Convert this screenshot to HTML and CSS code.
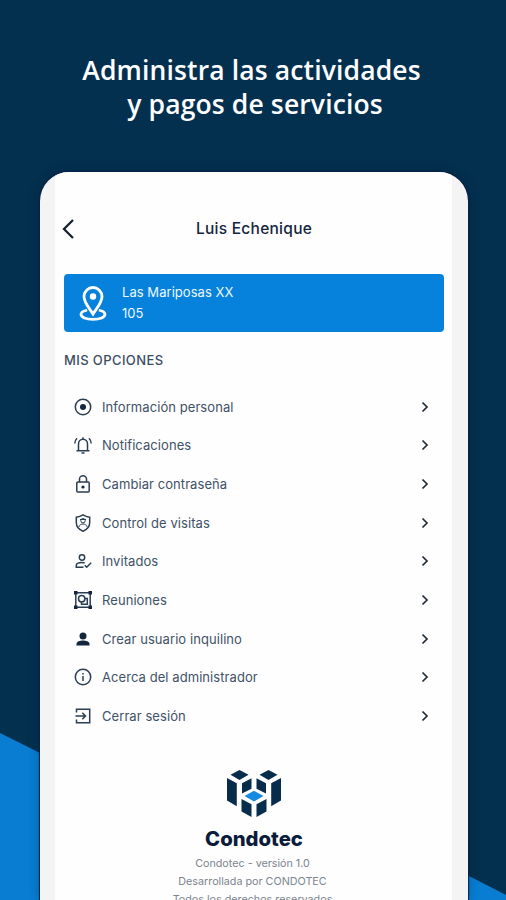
FILE: index.html
```html
<!DOCTYPE html>
<html lang="es">
<head>
<meta charset="utf-8">
<title>Condotec</title>
<link rel="stylesheet" href="styles.css">
</head>
<body>
<main class="promo">
  <svg class="backdrop" viewBox="0 0 506 900" aria-hidden="true"><path d="M0 733L40 753V900H0z"/><path d="M467 875L506 895V900H467z"/></svg>
  <h1 class="headline"><span class="line-one">Administra las actividades</span><br><span class="line-two">y pagos de servicios</span></h1>
  <section class="phone">
    <div class="screen">
      <header class="topbar">
        <svg class="back" viewBox="0 0 14 22"><path d="M12 2L3 11l9 9"/></svg>
        <h2>Luis Echenique</h2>
      </header>
      <div class="place">
        <svg class="pin" viewBox="0 0 28 36"><path d="M14 28C11 23 5 17 5 10.500a9 9 0 0 1 18 0C23 17 17 23 14 28z"/><circle cx="14" cy="10.500" r="3.200" class="fill"/><path d="M7 24.500c-3.500.8-5 2.300-5 3.800 0 3 5 5 12 5s12-2 12-5c0-1.500-1.500-3-5-3.800"/></svg>
        <div><p>Las Mariposas XX</p><p>105</p></div>
      </div>
      <h3 class="section-title">MIS OPCIONES</h3>
      <ul class="options">
        <li><svg class="icon" viewBox="0 0 18 18"><circle cx="9" cy="9" r="7.700"/><circle cx="9" cy="9" r="3" class="fill"/></svg><span class="label">Información personal</span><svg class="chevron" viewBox="0 0 8 12"><path d="M1.500 1.500L6 6l-4.500 4.500"/></svg></li>
        <li><svg class="icon" viewBox="0 0 18 18"><path d="M2.500 14.800h13M4.500 14.500V8a4.500 4.800 0 0 1 9 0v6.500M9 3V1.300M7.500 17h3M.8 7.500c0-2.500.8-4 2.300-5.300M17.200 7.500c0-2.500-.8-4-2.300-5.300"/></svg><span class="label">Notificaciones</span><svg class="chevron" viewBox="0 0 8 12"><path d="M1.500 1.500L6 6l-4.500 4.500"/></svg></li>
        <li><svg class="icon" viewBox="0 0 18 18"><rect x="2.800" y="7" width="12.400" height="10" rx="1"/><path d="M5.500 7V4a3.500 3.200 0 0 1 7 0v3"/><circle cx="9" cy="12" r="1.600" class="fill"/></svg><span class="label">Cambiar contraseña</span><svg class="chevron" viewBox="0 0 8 12"><path d="M1.500 1.500L6 6l-4.500 4.500"/></svg></li>
        <li><svg class="icon" viewBox="0 0 18 18"><path d="M9 .9c2 1.300 4 2 6.700 2.300v5.300c0 4-2.400 7-6.700 8.700-4.300-1.700-6.700-4.700-6.700-8.700V3.200C5 2.900 7 2.200 9 .9z"/><circle cx="9" cy="6.700" r="2.200" class="thin"/><path class="thin" d="M4.800 13c.7-2 2-3 4.200-3s3.500 1 4.200 3M6 5.500h6"/></svg><span class="label">Control de visitas</span><svg class="chevron" viewBox="0 0 8 12"><path d="M1.500 1.500L6 6l-4.500 4.500"/></svg></li>
        <li><svg class="icon" viewBox="0 0 18 18"><circle cx="8" cy="5.500" r="2.700"/><path d="M9.500 15.200H2.300v-1.600c0-1.800 2.500-3 5.700-3 1 0 2 .1 2.700.4M10.800 13.300l1.900 1.900 4.400-4.400"/></svg><span class="label">Invitados</span><svg class="chevron" viewBox="0 0 8 12"><path d="M1.500 1.500L6 6l-4.500 4.500"/></svg></li>
        <li><svg class="icon" viewBox="0 0 18 18"><path d="M1.800 1.800h14.400v14.400H1.800z"/><path class="fill" d="M0 0h3.500v3.500H0zM14.500 0H18v3.500h-3.500zM0 14.500h3.500V18H0zM14.500 14.500H18V18h-3.500z"/><circle cx="7.700" cy="7.700" r="3.200"/><path d="M11 7.500h2.300v5.800H7.500V11"/></svg><span class="label">Reuniones</span><svg class="chevron" viewBox="0 0 8 12"><path d="M1.500 1.500L6 6l-4.500 4.500"/></svg></li>
        <li><svg class="icon" viewBox="0 0 18 18"><circle cx="9" cy="6" r="3.500" class="fill"/><path class="fill" d="M2.500 15.500v-1.800c0-2.100 3.500-3.300 6.500-3.300s6.500 1.200 6.500 3.300v1.800z"/></svg><span class="label">Crear usuario inquilino</span><svg class="chevron" viewBox="0 0 8 12"><path d="M1.500 1.500L6 6l-4.500 4.500"/></svg></li>
        <li><svg class="icon" viewBox="0 0 18 18"><circle cx="9" cy="9" r="7.700"/><path d="M9 8v5M9 4.900v1.600"/></svg><span class="label">Acerca del administrador</span><svg class="chevron" viewBox="0 0 8 12"><path d="M1.500 1.500L6 6l-4.500 4.500"/></svg></li>
        <li><svg class="icon" viewBox="0 0 18 18"><path d="M2.500 5.500V2.200h13.200v13.600H2.500v-3.300M1.500 9h9.500M8.300 5.800L11.500 9l-3.200 3.200"/></svg><span class="label">Cerrar sesión</span><svg class="chevron" viewBox="0 0 8 12"><path d="M1.500 1.500L6 6l-4.500 4.500"/></svg></li>
      </ul>
      <footer class="about">
        <svg class="logo" viewBox="0 0 54 48"><path d="M12.500 0l9 4.700-9 5.300-9-5.300zM41.500 0l9 4.700-9 5.300-9-5.300zM0 8l9.800 5.200v23L0 30.500zM54 8l-9.800 5.200v23L54 30.500zM15 13.200l9.500-5v10.600L15 23.500zM39 13.200l-9.500-5v10.600l9.500 4.700zM14.500 29l10 5.300V47l-10-5.600zM39.500 29l-10 5.300V47l10-5.600z"/><path class="blue" d="M27 20.800l9.500 5.300-9.500 5.400-9.500-5.400z"/></svg>
        <p class="brand">Condotec</p>
        <p class="credit">Condotec - versión 1.0</p>
        <p class="credit">Desarrollada por CONDOTEC</p>
        <p class="credit">Todos los derechos reservados</p>
      </footer>
    </div>
  </section>
</main>
</body>
</html>
```
FILE: styles.css
```css
* { box-sizing: border-box; }
body { margin: 0; font-family: Inter, sans-serif; }
h1, h2, h3, p, ul { margin: 0; padding: 0; }
svg { display: block; flex: none; }
.promo { position: relative; height: 900px; overflow: hidden; background: #03304f; }
.backdrop { position: absolute; inset: 0; width: 506px; height: 900px; fill: #087dd2; }
.headline { position: relative; height: 172px; padding: 53px 3px 0 0; text-align: center; color: #fff; font: 600 26.500px/34px "Open Sans", sans-serif; letter-spacing: .13px; white-space: nowrap; }
.headline .line-two { padding-left: 7px; }
.phone { position: relative; width: 428px; height: 728px; margin-left: 40px; padding: 0 16px 0 15px; overflow: hidden; background: #f4f4f4; border-radius: 29px 29px 0 0; box-shadow: 0 0 1px 1px #08234b, 0 0 12px rgba(0, 18, 38, .3); }
.screen { height: 728px; padding: 0 8px 0 9px; overflow: hidden; background: #fefefe; }
.topbar { display: grid; grid-template-columns: 14px 1fr 14px; align-items: center; height: 102px; padding-top: 11px; }
.back { width: 14px; height: 22px; margin-left: -3px; }
.back path { fill: none; stroke: #16202e; stroke-width: 2.300; }
.topbar h2 { color: #14263d; font-size: 15.500px; font-weight: 500; letter-spacing: .27px; line-height: 20px; text-align: center; }
.place { display: flex; height: 58px; padding: 8px 15px; gap: 15px; color: #eef8ff; background: #0782dc; border-radius: 4px; }
.pin { width: 28px; height: 36px; margin-top: 4px; }
.pin path { fill: none; stroke: #fff; stroke-width: 2.800; stroke-linecap: round; }
.pin .fill { fill: #fff; }
.place p { font-size: 13px; letter-spacing: .05px; line-height: 21px; white-space: nowrap; }
.section-title { height: 55.500px; padding-top: 17.500px; color: #3b4d62; font-size: 13px; font-weight: 500; letter-spacing: .4px; line-height: 20px; white-space: nowrap; }
.options { list-style: none; }
.options li { display: flex; align-items: center; height: 38.660px; padding: 0 15px 0 10px; color: #3f5267; font-size: 13px; letter-spacing: .07px; }
.icon { width: 18px; height: 18px; fill: none; stroke: #2b3d51; stroke-width: 1.500; }
.icon .fill { fill: #14263d; stroke: none; }
.icon .thin { stroke-width: 1; }
.label { margin-left: 10px; white-space: nowrap; }
.chevron { width: 8px; height: 12px; margin-left: auto; fill: none; stroke: #202a36; stroke-width: 1.700; }
.about { display: flex; flex-direction: column; align-items: center; padding-top: 34.500px; white-space: nowrap; }
.logo { width: 54px; height: 48px; fill: #082d4c; }
.logo .blue { fill: #168ae3; }
.brand { height: 37px; padding-top: 7px; color: #0b1c3b; font-size: 20.300px; font-weight: 800; line-height: 28px; }
.credit { padding-right: 3px; color: #7c858e; font-size: 10.750px; line-height: 18px; }
```
